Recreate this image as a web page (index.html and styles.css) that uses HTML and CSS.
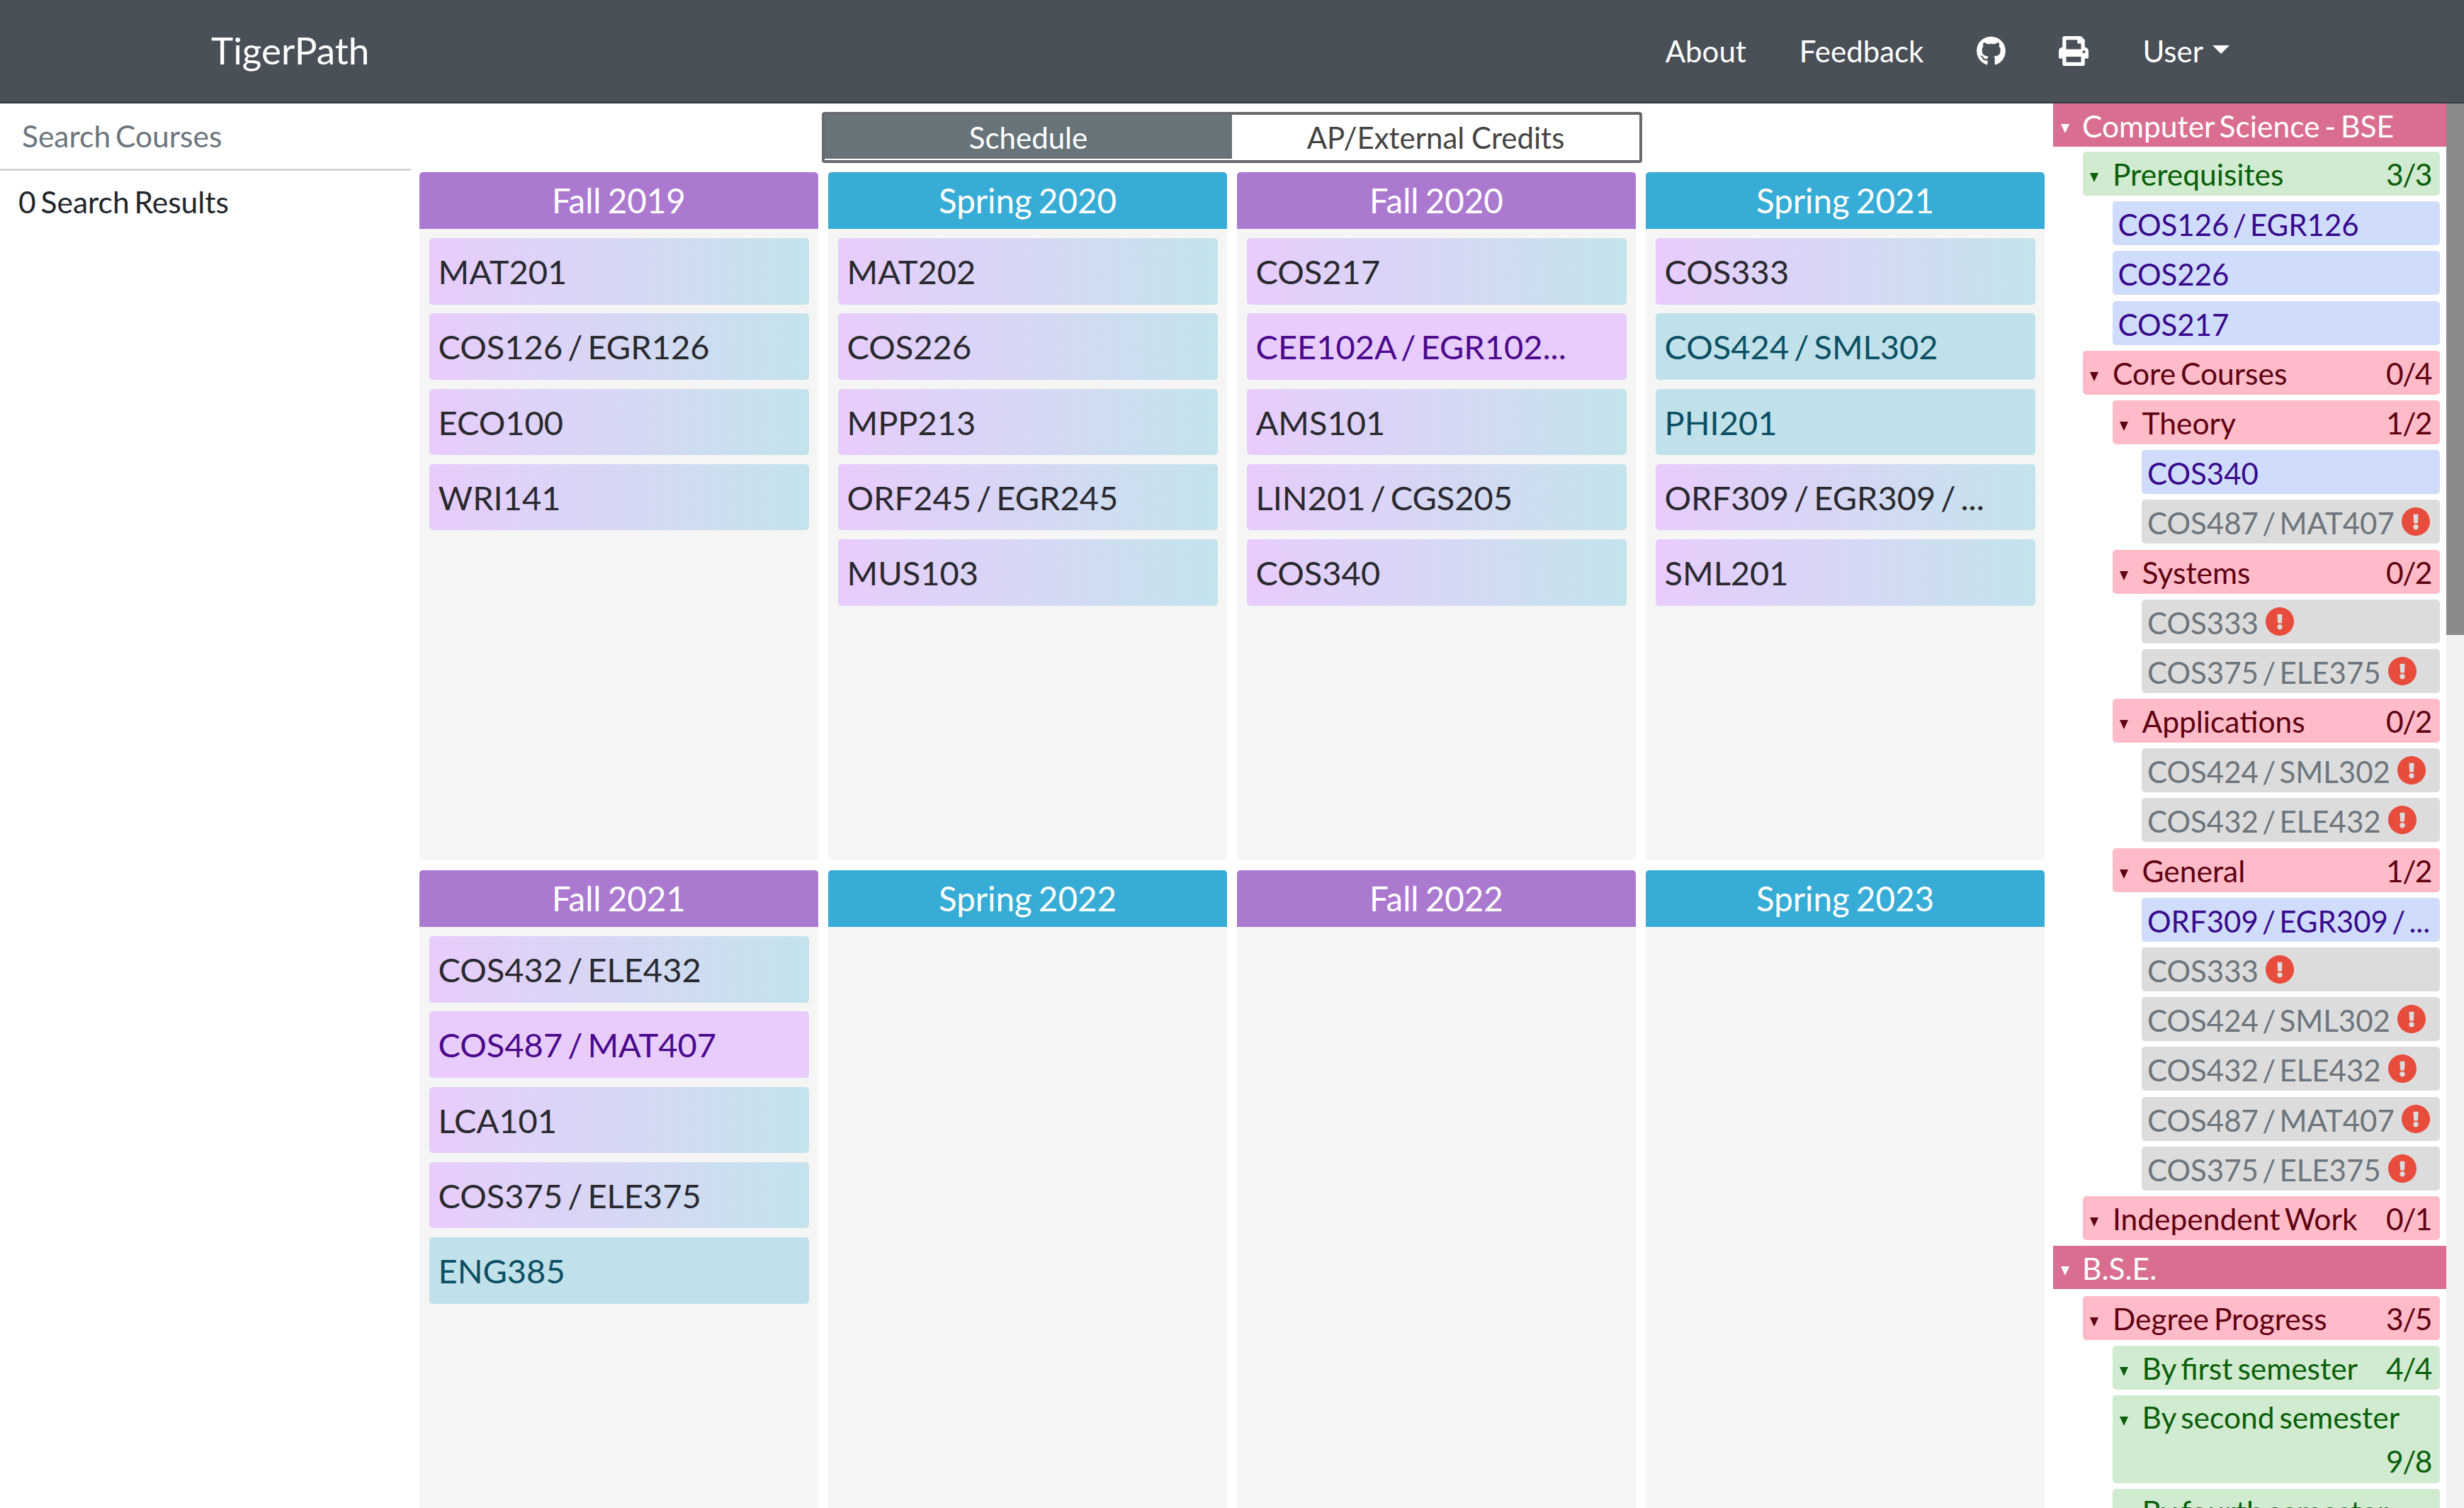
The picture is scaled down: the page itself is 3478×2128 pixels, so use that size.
FILE: index.html
```html
<!DOCTYPE html>
<html lang="en">
<head>
<meta charset="utf-8">
<title>TigerPath</title>
<link rel="stylesheet" href="styles.css">
</head>
<body>
<svg class="defs" aria-hidden="true">
  <symbol id="warn" viewBox="8 8 496 496"><path d="M504 256c0 136.997-111.043 248-248 248S8 392.997 8 256C8 119.083 119.043 8 256 8s248 111.083 248 248zm-248 50c-25.405 0-46 20.595-46 46s20.595 46 46 46 46-20.595 46-46-20.595-46-46-46zm-43.673-165.346l7.418 136c.347 6.364 5.609 11.346 11.982 11.346h48.546c6.373 0 11.635-4.982 11.982-11.346l7.418-136c.375-6.874-5.098-12.654-11.982-12.654h-63.383c-6.884 0-12.356 5.78-11.981 12.654z"/></symbol>
</svg>
<nav class="navbar">
  <a class="brand">TigerPath</a>
  <div class="nav-links">
    <a class="nav-link">About</a>
    <a class="nav-link">Feedback</a>
    <a class="nav-link nav-icon"><svg class="icon-github" viewBox="0 0 496 512"><path d="M165.9 397.4c0 2-2.3 3.6-5.2 3.6-3.3 0-5.6-1.6-5.6-3.6 0-2 2.3-3.6 5.2-3.6 3-.3 5.6 1.3 5.6 3.6zm-31.1-4.5c-.7 2 1.3 4.3 4.3 4.9 2.6 1 5.6 0 6.2-2s-1.3-4.3-4.3-5c-2.6-.7-5.5.3-6.2 2.1zm44.2-1.7c-2.9.7-4.9 2.6-4.6 4.9.3 2 2.9 3.3 5.9 2.6 2.9-.7 4.9-2.6 4.6-4.6-.3-1.9-3-3.2-5.9-2.9zM244.8 8C106.1 8 0 113.3 0 252c0 110.9 69.8 205.8 169.5 239.2 12.8 2.3 17.3-5.6 17.3-12.1 0-6.2-.3-40.4-.3-61.4 0 0-70 15-84.7-29.8 0 0-11.4-29.1-27.8-36.6 0 0-22.9-15.7 1.6-15.4 0 0 24.9 2 38.6 25.8 21.9 38.6 58.6 27.5 72.9 20.9 2.3-16 8.8-27.1 16-33.7-55.9-6.2-112.3-14.3-112.3-110.5 0-27.5 7.6-41.3 23.6-58.9-2.6-6.5-11.1-33.3 2.6-67.9 20.9-6.5 69 27 69 27 20-5.6 41.5-8.5 62.8-8.5s42.8 2.9 62.8 8.5c0 0 48.1-33.6 69-27 13.7 34.7 5.2 61.4 2.6 67.9 16 17.7 25.8 31.5 25.8 58.9 0 96.5-58.9 104.2-114.8 110.5 9.2 7.9 17 22.9 17 46.4 0 33.7-.3 75.4-.3 83.6 0 6.5 4.6 14.4 17.3 12.1C428.2 457.8 496 362.9 496 252 496 113.3 383.5 8 244.8 8z"/></svg></a>
    <a class="nav-link nav-icon nav-print"><svg class="icon-print" viewBox="0 0 512 512"><path d="M448 192V77.25c0-8.49-3.37-16.62-9.37-22.63L393.37 9.37c-6-6-14.14-9.37-22.63-9.37H96C78.33 0 64 14.33 64 32v160c-35.35 0-64 28.65-64 64v112c0 8.84 7.16 16 16 16h48v96c0 17.67 14.33 32 32 32h320c17.67 0 32-14.33 32-32v-96h48c8.84 0 16-7.16 16-16V256c0-35.35-28.65-64-64-64zm-64 256H128v-96h256v96zm0-224H128V64h192v48c0 8.84 7.16 16 16 16h48v96zm48 72c-13.25 0-24-10.75-24-24 0-13.26 10.75-24 24-24s24 10.74 24 24c0 13.25-10.75 24-24 24z"/></svg></a>
    <a class="nav-link nav-user">User<span class="caret"></span></a>
  </div>
</nav>
<main class="layout">
  <aside class="search">
    <div class="search-input">Search Courses</div>
    <div class="search-count">0 Search Results</div>
  </aside>
  <section class="center">
    <div class="toggle-row">
      <div class="toggle">
        <div class="toggle-btn active">Schedule</div>
        <div class="toggle-btn">AP/External Credits</div>
      </div>
    </div>
    <div class="semesters">
      <div class="semester">
        <h2 class="sem-head fall">Fall 2019</h2>
        <div class="sem-body">
          <div class="card mix">MAT201</div>
          <div class="card mix">COS126 / EGR126</div>
          <div class="card mix">ECO100</div>
          <div class="card mix">WRI141</div>
        </div>
      </div>
      <div class="semester">
        <h2 class="sem-head spring">Spring 2020</h2>
        <div class="sem-body">
          <div class="card mix">MAT202</div>
          <div class="card mix">COS226</div>
          <div class="card mix">MPP213</div>
          <div class="card mix">ORF245 / EGR245</div>
          <div class="card mix">MUS103</div>
        </div>
      </div>
      <div class="semester">
        <h2 class="sem-head fall">Fall 2020</h2>
        <div class="sem-body">
          <div class="card mix">COS217</div>
          <div class="card major">CEE102A / EGR102...</div>
          <div class="card mix">AMS101</div>
          <div class="card mix">LIN201 / CGS205</div>
          <div class="card mix">COS340</div>
        </div>
      </div>
      <div class="semester">
        <h2 class="sem-head spring">Spring 2021</h2>
        <div class="sem-body">
          <div class="card mix">COS333</div>
          <div class="card dist">COS424 / SML302</div>
          <div class="card dist">PHI201</div>
          <div class="card mix">ORF309 / EGR309 / ...</div>
          <div class="card mix">SML201</div>
        </div>
      </div>
      <div class="semester">
        <h2 class="sem-head fall">Fall 2021</h2>
        <div class="sem-body">
          <div class="card mix">COS432 / ELE432</div>
          <div class="card major">COS487 / MAT407</div>
          <div class="card mix">LCA101</div>
          <div class="card mix">COS375 / ELE375</div>
          <div class="card dist">ENG385</div>
        </div>
      </div>
      <div class="semester">
        <h2 class="sem-head spring">Spring 2022</h2>
        <div class="sem-body"></div>
      </div>
      <div class="semester">
        <h2 class="sem-head fall">Fall 2022</h2>
        <div class="sem-body"></div>
      </div>
      <div class="semester">
        <h2 class="sem-head spring">Spring 2023</h2>
        <div class="sem-body"></div>
      </div>
    </div>
  </section>
  <aside class="reqs">
    <div class="tree">
      <div class="major-row"><span class="tri"></span>Computer Science - BSE</div>
      <div class="level">
        <div class="row ok"><span class="tri"></span><span class="label">Prerequisites</span><span class="count">3/3</span></div>
        <div class="level">
          <div class="course taken">COS126 / EGR126</div>
          <div class="course taken">COS226</div>
          <div class="course taken">COS217</div>
        </div>
        <div class="row bad"><span class="tri"></span><span class="label">Core Courses</span><span class="count">0/4</span></div>
        <div class="level">
          <div class="row bad"><span class="tri"></span><span class="label">Theory</span><span class="count">1/2</span></div>
          <div class="level">
            <div class="course taken">COS340</div>
            <div class="course open">COS487 / MAT407<svg class="warn"><use href="#warn"/></svg></div>
          </div>
          <div class="row bad"><span class="tri"></span><span class="label">Systems</span><span class="count">0/2</span></div>
          <div class="level">
            <div class="course open">COS333<svg class="warn"><use href="#warn"/></svg></div>
            <div class="course open">COS375 / ELE375<svg class="warn"><use href="#warn"/></svg></div>
          </div>
          <div class="row bad"><span class="tri"></span><span class="label">Applications</span><span class="count">0/2</span></div>
          <div class="level">
            <div class="course open">COS424 / SML302<svg class="warn"><use href="#warn"/></svg></div>
            <div class="course open">COS432 / ELE432<svg class="warn"><use href="#warn"/></svg></div>
          </div>
          <div class="row bad"><span class="tri"></span><span class="label">General</span><span class="count">1/2</span></div>
          <div class="level">
            <div class="course taken">ORF309 / EGR309 / ...</div>
            <div class="course open">COS333<svg class="warn"><use href="#warn"/></svg></div>
            <div class="course open">COS424 / SML302<svg class="warn"><use href="#warn"/></svg></div>
            <div class="course open">COS432 / ELE432<svg class="warn"><use href="#warn"/></svg></div>
            <div class="course open">COS487 / MAT407<svg class="warn"><use href="#warn"/></svg></div>
            <div class="course open">COS375 / ELE375<svg class="warn"><use href="#warn"/></svg></div>
          </div>
        </div>
        <div class="row bad"><span class="tri"></span><span class="label">Independent Work</span><span class="count">0/1</span></div>
      </div>
      <div class="major-row"><span class="tri"></span>B.S.E.</div>
      <div class="level">
        <div class="row bad"><span class="tri"></span><span class="label">Degree Progress</span><span class="count">3/5</span></div>
        <div class="level">
          <div class="row ok"><span class="tri"></span><span class="label">By first semester</span><span class="count">4/4</span></div>
          <div class="row ok wrapped"><span class="tri"></span><span class="label">By second semester</span><span class="count">9/8</span></div>
          <div class="row ok"><span class="tri"></span><span class="label">By fourth semester</span><span class="count">18/17</span></div>
        </div>
      </div>
    </div>
    <div class="scrollbar"><div class="scroll-thumb"></div></div>
  </aside>
</main>
</body>
</html>
```
FILE: styles.css
```css
* { box-sizing: border-box; }
html, body { margin: 0; height: 100%; }
body {
  height: 2128px;
  overflow: hidden;
  display: flex;
  flex-direction: column;
  font-family: Lato, "Open Sans", sans-serif;
  font-size: 42px;
  color: #212529;
  background: #fff;
}
.defs { width: 0; height: 0; display: block; position: absolute; }

.navbar {
  flex: 0 0 146px;
  display: flex;
  align-items: center;
  justify-content: space-between;
  padding: 0 331px 0 298px;
  background: #495057;
  border-bottom: 2px solid #343a40;
  color: #fff;
}
.brand { font-size: 53px; padding-bottom: 3px; }
.nav-links { display: flex; align-items: center; gap: 75px; }
.nav-link { display: flex; align-items: center; }
.nav-print { margin-right: 1px; }
.icon-github { width: 41px; height: 42px; fill: #fff; display: block; }
.icon-print { width: 42px; height: 42px; fill: #fff; display: block; }
.caret {
  width: 0;
  height: 0;
  margin-left: 13px;
  margin-bottom: 4px;
  border-left: 12px solid transparent;
  border-right: 12px solid transparent;
  border-top: 12px solid #fff;
}

.layout { flex: 1; min-height: 0; display: flex; }

.search { flex: 0 0 580px; font-size: 42.5px; word-spacing: -4px; }
.search-input {
  height: 95px;
  padding: 0 31px;
  line-height: 92px;
  color: #6c757d;
  border-bottom: 3px solid #ced4da;
}
.search-count { padding: 13px 26px; line-height: 62px; }

.center {
  flex: 0 0 2294px;
  margin-left: 12px;
  overflow: hidden;
  display: flex;
  flex-direction: column;
}
.toggle-row { flex: 0 0 97px; display: flex; justify-content: center; padding-top: 12px; }
.toggle {
  width: 1158px;
  height: 72px;
  display: flex;
  border: 4px solid #666a6e;
  border-radius: 4px;
  background: #fff;
  word-spacing: -1px;
  color: #444;
}
.toggle-btn { flex: 1; text-align: center; line-height: 64px; }
.toggle-btn.active { margin-bottom: 2px; background: #68737a; color: #fff; }

.semesters {
  display: grid;
  grid-template-columns: repeat(4, 1fr);
  grid-template-rows: 970px 970px;
  column-gap: 14px;
  row-gap: 15px;
}
.semester { display: flex; flex-direction: column; min-width: 0; }
.sem-head {
  flex: 0 0 79px;
  margin: 0;
  font-size: 47.5px;
  font-weight: 400;
  line-height: 80px;
  word-spacing: -3px;
  text-align: center;
  color: #fff;
  border-radius: 5px 5px 0 0;
}
.fall { background: #ab79d0; }
.spring { background: #36acd6; }
.sem-body {
  flex: 1;
  padding: 13px 13px 0 13.5px;
  background: #f5f5f5;
  border-radius: 0 0 5px 5px;
}
.card {
  height: 93.5px;
  margin-bottom: 12.8px;
  padding: 0 13px;
  font-size: 47px;
  line-height: 95px;
  word-spacing: -5px;
  border-radius: 5px;
  white-space: nowrap;
  overflow: hidden;
}
.mix { background: linear-gradient(90deg, #e8ccfc, #c3e3eb); color: #29292f; }
.major { background: #e8ccfc; color: #4b0a8c; }
.dist { background: #c1e1ea; color: #0b5064; }

.reqs { flex: 1; min-width: 0; display: flex; }
.tree {
  flex: 1;
  min-width: 0;
  overflow: hidden;
  padding-left: 12px;
  font-size: 42.5px;
  word-spacing: -4px;
}
.major-row {
  height: 61px;
  margin-bottom: 7px;
  display: flex;
  padding-left: 11px;
  line-height: 63px;
  background: #d96e90;
  color: #fff;
}
.major-row ~ .major-row { margin-bottom: 9.5px; }
.level { padding-left: 42px; }
.major-row + .level { padding-right: 9px; }
.level .level { padding-right: 0; padding-left: 41.5px; }
.row, .course {
  min-height: 62px;
  margin-bottom: 8.2px;
  border-radius: 5px;
  line-height: 60px;
  padding-top: 2px;
}
.row { display: flex; flex-wrap: wrap; padding-right: 12px; padding-left: 10px; }
.row .tri { margin-top: 28px; }
.major-row .tri { border-top-color: #fff; margin-top: 29px; margin-right: 18px; }
.tri {
  width: 0;
  height: 0;
  margin-right: 20px;
  border-left: 6px solid transparent;
  border-right: 6px solid transparent;
  border-top: 13px solid currentColor;
}
.label { flex: 1; white-space: nowrap; }
.count { letter-spacing: -1.5px; }
.wrapped { line-height: 62px; padding-top: 0; }
.wrapped .tri { margin-top: 30px; }
.wrapped .count { flex: 0 0 100%; text-align: right; }
.ok { background: #d0ebd0; color: #0b5f0b; }
.bad { background: #ffbbc8; color: #5e0012; }
.course {
  height: 62px;
  padding: 4px 8px 0;
  line-height: 58px;
  display: flex;
  align-items: center;
  white-space: nowrap;
  font-size: 42px;
  word-spacing: -5.5px;
}
.taken { background: #d0dcfc; color: #380a8c; }
.open { background: #dcdcdc; color: #6c757d; }
.warn { width: 40px; height: 40px; margin-left: 10px; margin-top: -4px; fill: #e74c3c; flex: none; }

.scrollbar { flex: 0 0 25px; background: #f1f1f1; }
.scroll-thumb { height: 750px; background: #8a8a8a; }
```
